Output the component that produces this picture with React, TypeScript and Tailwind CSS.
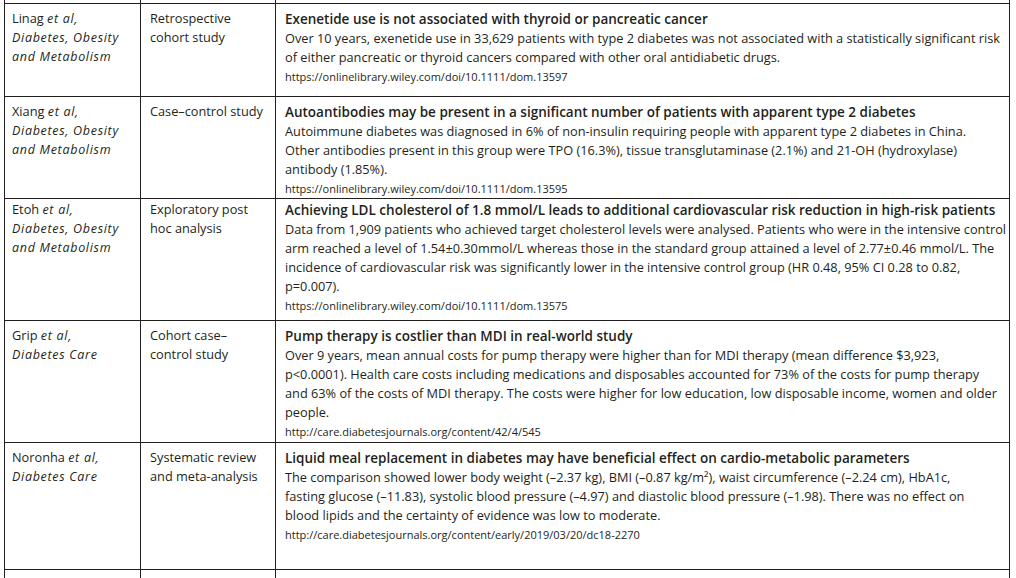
type Row = {
  author: string;
  journal: string[];
  design: string[];
  title: string;
  body: string[];
  url: string;
  height: string;
};

const ROWS: Row[] = [
  {
    author: "Linag",
    journal: ["Diabetes, Obesity", "and Metabolism"],
    design: ["Retrospective", "cohort study"],
    title: "Exenetide use is not associated with thyroid or pancreatic cancer",
    body: [
      "Over 10 years, exenetide use in 33,629 patients with type 2 diabetes was not associated with a statistically significant risk",
      "of either pancreatic or thyroid cancers compared with other oral antidiabetic drugs.",
    ],
    url: "https://onlinelibrary.wiley.com/doi/10.1111/dom.13597",
    height: "h-[93px]",
  },
  {
    author: "Xiang",
    journal: ["Diabetes, Obesity", "and Metabolism"],
    design: ["Case–control study"],
    title: "Autoantibodies may be present in a significant number of patients with apparent type 2 diabetes",
    body: [
      "Autoimmune diabetes was diagnosed in 6% of non-insulin requiring people with apparent type 2 diabetes in China.",
      "Other antibodies present in this group were TPO (16.3%), tissue transglutaminase (2.1%) and 21-OH (hydroxylase)",
      "antibody (1.85%).",
    ],
    url: "https://onlinelibrary.wiley.com/doi/10.1111/dom.13595",
    height: "h-[98px]",
  },
  {
    author: "Etoh",
    journal: ["Diabetes, Obesity", "and Metabolism"],
    design: ["Exploratory post", "hoc analysis"],
    title: "Achieving LDL cholesterol of 1.8 mmol/L leads to additional cardiovascular risk reduction in high-risk patients",
    body: [
      "Data from 1,909 patients who achieved target cholesterol levels were analysed. Patients who were in the intensive control",
      "arm reached a level of 1.54±0.30mmol/L whereas those in the standard group attained a level of 2.77±0.46 mmol/L. The",
      "incidence of cardiovascular risk was significantly lower in the intensive control group (HR 0.48, 95% CI 0.28 to 0.82,",
      "p=0.007).",
    ],
    url: "https://onlinelibrary.wiley.com/doi/10.1111/dom.13575",
    height: "h-[126px]",
  },
  {
    author: "Grip",
    journal: ["Diabetes Care"],
    design: ["Cohort case–", "control study"],
    title: "Pump therapy is costlier than MDI in real-world study",
    body: [
      "Over 9 years, mean annual costs for pump therapy were higher than for MDI therapy (mean difference $3,923,",
      "p<0.0001). Health care costs including medications and disposables accounted for 73% of the costs for pump therapy",
      "and 63% of the costs of MDI therapy. The costs were higher for low education, low disposable income, women and older",
      "people.",
    ],
    url: "http://care.diabetesjournals.org/content/42/4/545",
    height: "h-[122px]",
  },
  {
    author: "Noronha",
    journal: ["Diabetes Care"],
    design: ["Systematic review", "and meta-analysis"],
    title: "Liquid meal replacement in diabetes may have beneficial effect on cardio-metabolic parameters",
    body: [
      "The comparison showed lower body weight (–2.37 kg), BMI (–0.87 kg/m²), waist circumference (–2.24 cm), HbA1c,",
      "fasting glucose (–11.83), systolic blood pressure (–4.97) and diastolic blood pressure (–1.98). There was no effect on",
      "blood lipids and the certainty of evidence was low to moderate.",
    ],
    url: "http://care.diabetesjournals.org/content/early/2019/03/20/dc18-2270",
    height: "h-[127px]",
  },
];

const cell = "border-r border-b border-[#231f20] whitespace-nowrap";
const italic = "italic text-[12.5px] tracking-[0.7px]";

export default function App() {
  return (
    <div className="h-[578px] w-[1016px] overflow-hidden bg-white font-['Open_Sans',sans-serif] text-[12.75px] leading-[19px] text-[#231f20]">
      <div className="ml-[4px] w-[1006px] border-l border-[#231f20]">
        {/* table continues above the crop */}
        <div className="grid h-[4px] grid-cols-[136px_135px_734px] border-b border-[#231f20]">
          <div className="border-r border-[#231f20]" />
          <div className="border-r border-[#231f20]" />
          <div className="border-r border-[#231f20]" />
        </div>

        {ROWS.map((row) => (
          <div key={row.url} className={`grid grid-cols-[136px_135px_734px] ${row.height}`}>
            <div className={`${cell} pl-[7px] pt-[5px]`}>
              <div>
                {row.author} <span className={italic}>et al,</span>
              </div>
              {row.journal.map((line) => (
                <div key={line} className={italic}>
                  {line}
                </div>
              ))}
            </div>
            <div className={`${cell} pl-[9px] pt-[5px]`}>
              {row.design.map((line) => (
                <div key={line}>{line}</div>
              ))}
            </div>
            <div className={`${cell} pl-[9px] pt-[6px]`}>
              <div className="text-[13.5px] font-semibold">{row.title}</div>
              {row.body.map((line) => (
                <div key={line}>{line}</div>
              ))}
              <div className="text-[11px]">{row.url}</div>
            </div>
          </div>
        ))}

        {/* table continues below the crop */}
        <div className="grid h-[8px] grid-cols-[136px_135px_734px]">
          <div className="border-r border-[#231f20]" />
          <div className="border-r border-[#231f20]" />
          <div className="border-r border-[#231f20]" />
        </div>
      </div>
    </div>
  );
}
